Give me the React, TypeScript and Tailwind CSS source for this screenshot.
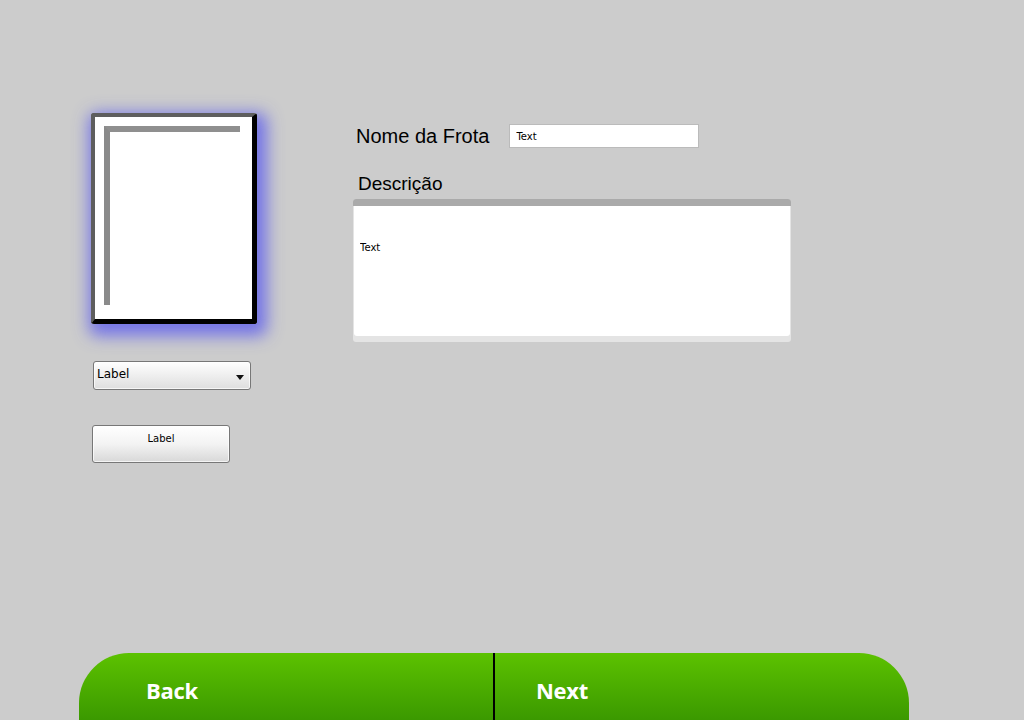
import { useState } from "react";

const App = () => {
  const [name, setName] = useState("Text");
  const [desc, setDesc] = useState("Text");

  return (
    <div className="relative h-[720px] w-[1024px] overflow-hidden bg-[#cccccc] font-['Liberation_Sans',Arial,sans-serif]">
      <div className="flex pl-[91px] pt-[113px]">
        {/* left column: picture frame, combo, button */}
        <div className="flex w-[166px] flex-col">
          <div className="h-[211px] w-[166px] rounded-[3px] border-t-[4px] border-l-[4px] border-r-[5px] border-b-[5px] border-t-[#5e5e5e] border-l-[#5e5e5e] border-r-black border-b-black shadow-[4px_6px_16px_6px_rgba(100,100,235,0.85)]">
            <div className="h-full w-full bg-white pt-[9px] pl-[9px] pr-[12px] pb-[14px]">
              <div className="h-full w-full border-t-[6px] border-l-[6px] border-t-[#8f8f8f] border-l-[#8a8a8a]" />
            </div>
          </div>

          <div className="mt-[37px] ml-[2px] flex h-[29px] w-[158px] items-center justify-between rounded-[3px] border border-[#777] bg-gradient-to-b from-white to-[#dedede] pl-[3px] pr-[6px] shadow-[inset_0_0_0_1px_rgba(255,255,255,0.7)]">
            <span className="-mt-[4px] font-['DejaVu_Sans',sans-serif] text-[12px] text-black">Label</span>
            <svg width="8" height="5" viewBox="0 0 8 5" className="mt-[4px]">
              <path d="M0 0 H8 L4 5 Z" fill="#111" />
            </svg>
          </div>

          <button
            type="button"
            className="mt-[35px] ml-[1px] flex h-[38px] w-[138px] justify-center rounded-[3px] border border-[#777] bg-gradient-to-b from-white via-[#f3f3f3] to-[#d8d8d8] pt-[5px] shadow-[inset_0_0_0_1px_rgba(255,255,255,0.7)]"
          >
            <span className="font-['DejaVu_Sans',sans-serif] text-[10px] text-black">Label</span>
          </button>
        </div>

        {/* form */}
        <div className="ml-[96px] flex flex-col">
          <div className="mt-[8px] flex items-center">
            <span className="ml-[3px] text-[20px] text-black">Nome da Frota</span>
            <input
              value={name}
              onChange={(e) => setName(e.target.value)}
              className="ml-[20px] h-[24px] w-[190px] border border-[#bbb] bg-white pl-[6px] font-['DejaVu_Sans',sans-serif] text-[10px] text-black outline-none"
            />
          </div>

          <span className="mt-[22px] ml-[5px] text-[19px] leading-[22px] text-black">Descrição</span>

          <div className="mt-[4px] w-[438px] overflow-hidden rounded-[3px] bg-[#e4e4e4]">
            <div className="h-[7px] bg-[#aaaaaa]" />
            <div className="mx-[1px] h-[130px] rounded-b-[3px] bg-white px-[6px] pt-[34px]">
              <textarea
                value={desc}
                onChange={(e) => setDesc(e.target.value)}
                className="h-[80px] w-full resize-none font-['DejaVu_Sans',sans-serif] text-[10px] text-black outline-none"
              />
            </div>
            <div className="h-[6px]" />
          </div>
        </div>
      </div>

      {/* bottom navigation */}
      <div className="absolute bottom-0 left-[79px] flex h-[67px] w-[830px] overflow-hidden rounded-t-[50px] bg-gradient-to-b from-[#5cc200] to-[#3b9900] font-['Open_Sans','DejaVu_Sans',sans-serif]">
        <button type="button" className="flex h-full w-[414px] items-center pl-[67px] pt-[8px]">
          <span className="text-[22px] font-bold tracking-[-0.3px] text-white">Back</span>
        </button>
        <div className="h-full w-[2px] bg-black" />
        <button type="button" className="flex h-full flex-1 items-center pl-[41px] pt-[8px]">
          <span className="text-[22px] font-bold tracking-[-0.3px] text-white">Next</span>
        </button>
      </div>
    </div>
  );
};

export default App;
